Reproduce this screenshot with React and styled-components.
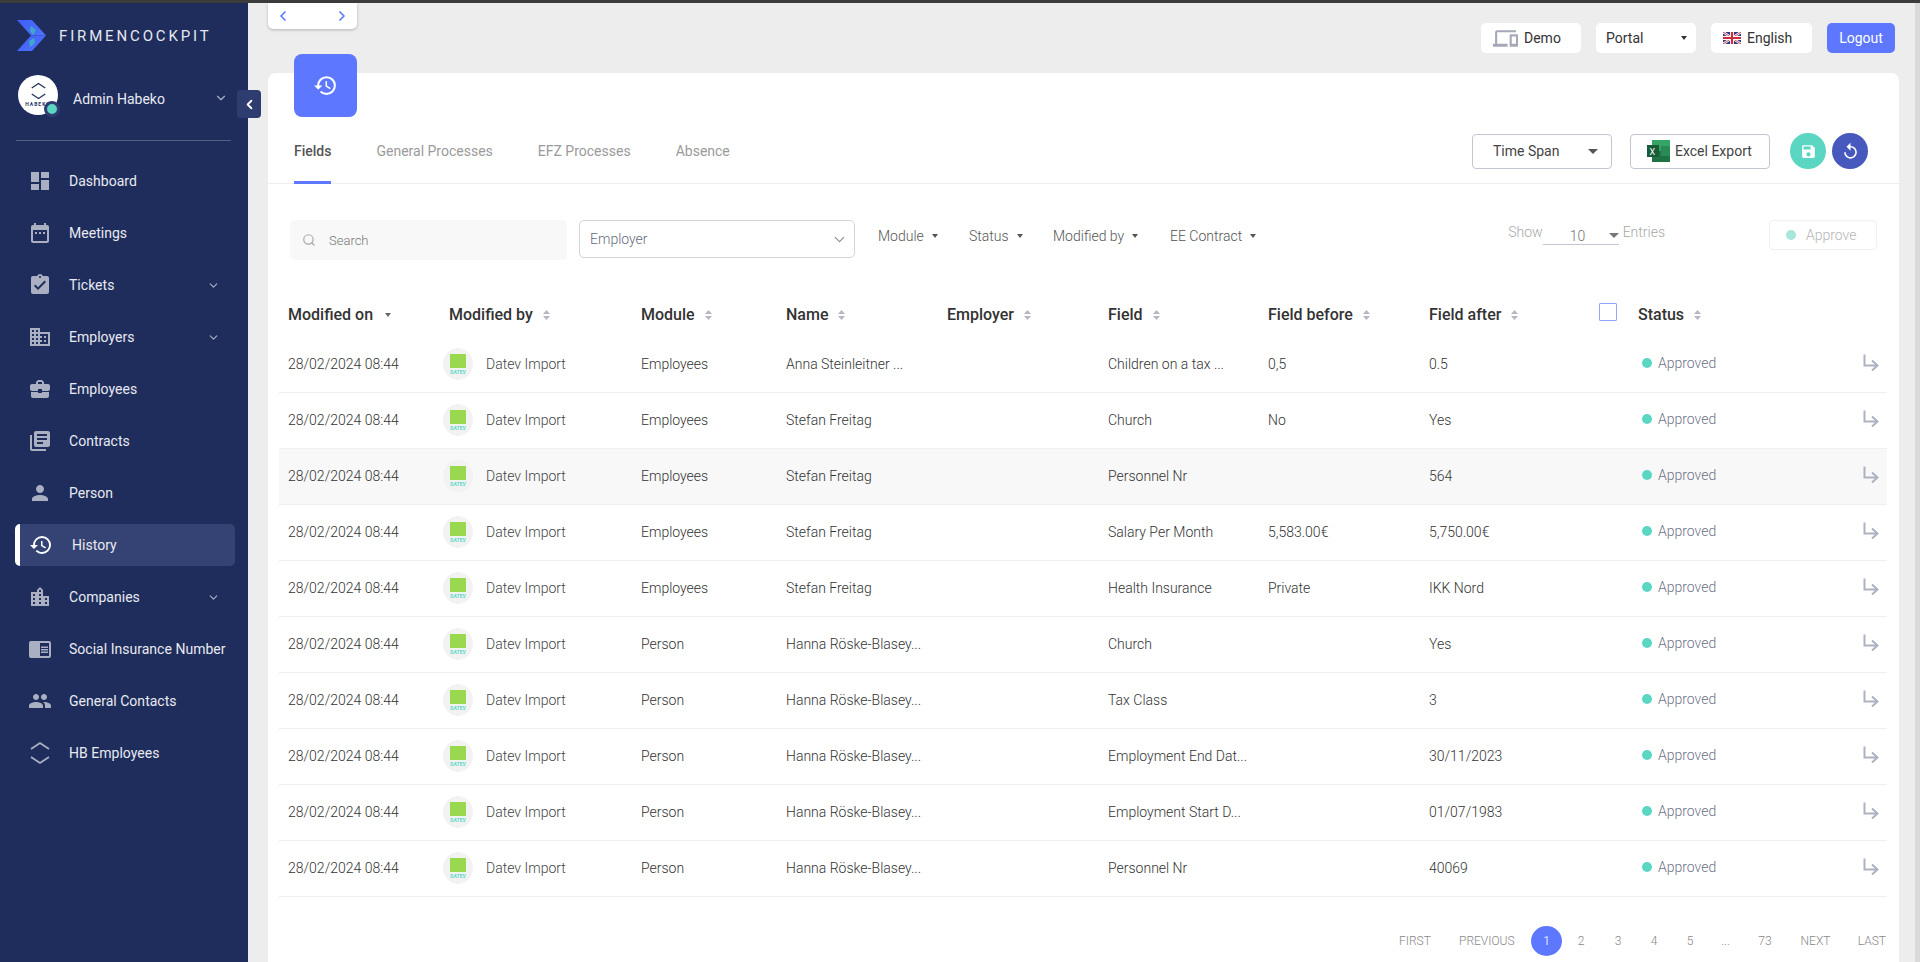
import React from 'react';
import styled, { createGlobalStyle } from 'styled-components';
import {
  MdDashboard, MdDateRange, MdAssignmentTurnedIn, MdBusiness, MdBusinessCenter, MdLibraryBooks,
  MdPerson, MdHistory, MdLocationCity, MdChromeReaderMode, MdPeople, MdDevices, MdSave, MdReplay,
} from 'react-icons/md';
import { ChevronDown, ChevronLeft, ChevronRight, Search } from 'lucide-react';

const GlobalStyle = createGlobalStyle`
  html, body { margin: 0; height: 100%; overflow: hidden; }
  body { font-family: Roboto, "Liberation Sans", sans-serif; font-size: 14px; color: #333; background: #ededed; }
  * { box-sizing: border-box; }
`;

const HabekoMark = ({ size = 20 }) => (
  <svg width={size} height={size * 1.2} viewBox="0 0 20 24" fill="none" stroke="currentColor" strokeWidth="1.8">
    <path d="M1 8 L10 2 L19 8" />
    <path d="M1 16 L10 22 L19 16" />
  </svg>
);

const navItems = [
  { label: 'Dashboard', icon: MdDashboard },
  { label: 'Meetings', icon: MdDateRange },
  { label: 'Tickets', icon: MdAssignmentTurnedIn, more: true },
  { label: 'Employers', icon: MdBusiness, more: true },
  { label: 'Employees', icon: MdBusinessCenter },
  { label: 'Contracts', icon: MdLibraryBooks },
  { label: 'Person', icon: MdPerson },
  { label: 'History', icon: MdHistory, active: true },
  { label: 'Companies', icon: MdLocationCity, more: true },
  { label: 'Social Insurance Number', icon: MdChromeReaderMode },
  { label: 'General Contacts', icon: MdPeople },
  { label: 'HB Employees', icon: HabekoMark },
];

const rows = [
  ['Employees', 'Anna Steinleitner ...', 'Children on a tax ...', '0,5', '0.5'],
  ['Employees', 'Stefan Freitag', 'Church', 'No', 'Yes'],
  ['Employees', 'Stefan Freitag', 'Personnel Nr', '', '564', true],
  ['Employees', 'Stefan Freitag', 'Salary Per Month', '5,583.00€', '5,750.00€'],
  ['Employees', 'Stefan Freitag', 'Health Insurance', 'Private', 'IKK Nord'],
  ['Person', 'Hanna Röske-Blasey...', 'Church', '', 'Yes'],
  ['Person', 'Hanna Röske-Blasey...', 'Tax Class', '', '3'],
  ['Person', 'Hanna Röske-Blasey...', 'Employment End Dat...', '', '30/11/2023'],
  ['Person', 'Hanna Röske-Blasey...', 'Employment Start D...', '', '01/07/1983'],
  ['Person', 'Hanna Röske-Blasey...', 'Personnel Nr', '', '40069'],
];

const columns = '161px 192px 145px 161px 161px 160px 161px 170px 1fr';

const headers = [
  { label: 'Modified on', sorted: true },
  { label: 'Modified by' },
  { label: 'Module' },
  { label: 'Name' },
  { label: 'Employer' },
  { label: 'Field' },
  { label: 'Field before' },
  { label: 'Field after' },
];

const App = () => (
  <>
    <GlobalStyle />
    <Page>
      <TopEdge />
      <Body>
        <Sidebar>
          <Brand>
            <svg width="29" height="31" viewBox="0 0 29 31">
              <defs>
                <linearGradient id="logoTop" x1="0" y1="0" x2="1" y2="1">
                  <stop offset="0" stopColor="#3f5ff5" />
                  <stop offset="1" stopColor="#4f74ff" />
                </linearGradient>
              </defs>
              <polygon points="0,0 15,0 29,15.5 14,15.5" fill="url(#logoTop)" />
              <polygon points="0,31 15,31 29,15.5 14,15.5" fill="url(#logoTop)" />
              <polygon points="14,6 19,10 16,15 13,11" fill="#3fa9c9" />
              <polygon points="12,21 17,18 18,23 13,27" fill="#3fa9c9" />
            </svg>
            <BrandName>FIRMENCOCKPIT</BrandName>
          </Brand>
          <Profile>
            <Avatar>
              <HabekoMark size={15} />
              <AvatarText>HABEKO</AvatarText>
              <OnlineDot />
            </Avatar>
            <ProfileName>Admin Habeko</ProfileName>
            <ProfileChevron><ChevronDown size={14} /></ProfileChevron>
            <CollapseButton><ChevronLeft size={15} strokeWidth={3} /></CollapseButton>
          </Profile>
          <SideDivider />
          <Nav>
            {navItems.map(({ label, icon: Icon, more, active }) => (
              <NavItem key={label} $active={active}>
                <NavIcon $active={active}><Icon size={label === 'HB Employees' ? 20 : 24} /></NavIcon>
                <NavLabel $active={active}>{label}</NavLabel>
                {more && <NavChevron><ChevronDown size={13} /></NavChevron>}
              </NavItem>
            ))}
          </Nav>
        </Sidebar>
        <Main>
          <TopRow>
            <Pager>
              <ChevronLeft size={16} strokeWidth={2.5} />
              <ChevronRight size={16} strokeWidth={2.5} />
            </Pager>
            <TopActions>
              <TopButton $width={100} $gap={6}>
                <MdDevices size={25} color="#a4a9b8" />
                <span>Demo</span>
              </TopButton>
              <TopButton $width={100} $between>
                <span>Portal</span>
                <Caret $size={3.5} $color="#333" />
              </TopButton>
              <TopButton $width={101} $gap={6}>
                <svg width="18" height="12" viewBox="0 0 60 40">
                  <rect width="60" height="40" fill="#2b3a7c" />
                  <path d="M0 0 L60 40 M60 0 L0 40" stroke="#fff" strokeWidth="8" />
                  <path d="M0 0 L60 40 M60 0 L0 40" stroke="#cf2b3a" strokeWidth="3" />
                  <path d="M30 0 V40 M0 20 H60" stroke="#fff" strokeWidth="13" />
                  <path d="M30 0 V40 M0 20 H60" stroke="#cf2b3a" strokeWidth="7" />
                </svg>
                <span>English</span>
              </TopButton>
              <LogoutButton>Logout</LogoutButton>
            </TopActions>
          </TopRow>
          <Card>
            <HistoryBadge><MdHistory size={25} /></HistoryBadge>
            <TabsRow>
              <Tabs>
                <Tab $active>Fields</Tab>
                <Tab>General Processes</Tab>
                <Tab>EFZ Processes</Tab>
                <Tab>Absence</Tab>
              </Tabs>
              <TabActions>
                <OutlineButton $width={140}>
                  <span>Time Span</span>
                  <Caret $size={5} $color="#555" />
                </OutlineButton>
                <ExportButton>
                  <svg width="23" height="22" viewBox="0 0 23 22">
                    <rect x="5" y="0" width="18" height="11" fill="#35a467" />
                    <rect x="5" y="11" width="18" height="11" fill="#1f7244" />
                    <rect x="14" y="6" width="9" height="10" fill="#2a8a55" />
                    <rect x="0" y="5" width="12" height="12" fill="#185c37" />
                    <text x="2.6" y="14.5" fontSize="9" fill="#fff" fontFamily="Roboto">X</text>
                  </svg>
                  <span>Excel Export</span>
                </ExportButton>
                <RoundButton $color="#5bd6c3" $first><MdSave size={17} /></RoundButton>
                <RoundButton $color="#4759bd"><MdReplay size={19} /></RoundButton>
              </TabActions>
            </TabsRow>
            <FilterRow>
              <SearchBox>
                <Search size={14} color="#a8a8a8" />
                <span>Search</span>
              </SearchBox>
              <EmployerSelect>
                <span>Employer</span>
                <ChevronDown size={17} color="#888" strokeWidth={1.5} />
              </EmployerSelect>
              <FilterMenus>
                {[['Module', 91], ['Status', 84], ['Modified by', 117], ['EE Contract', 100]].map(([label, width]) => (
                  <FilterMenu key={label} $width={width}>
                    {label}
                    <Caret $size={3.5} $color="#555" />
                  </FilterMenu>
                ))}
              </FilterMenus>
              <EntriesControl>
                <span>Show</span>
                <EntriesSelect>
                  <b>10</b>
                  <Caret $size={5} $color="#777" />
                </EntriesSelect>
                <span>Entries</span>
              </EntriesControl>
              <ApproveButton>
                <ApproveDot />
                Approve
              </ApproveButton>
            </FilterRow>
            <Table>
              <HeadRow>
                {headers.map(({ label, sorted }) => (
                  <HeadCell key={label} $gap={sorted ? 12 : 10}>
                    {label}
                    {sorted ? <Caret $size={3.5} $color="#666" /> : <SortArrows />}
                  </HeadCell>
                ))}
                <StatusHead>
                  <HeadCheck />
                  <HeadCell>Status<SortArrows /></HeadCell>
                </StatusHead>
              </HeadRow>
              {rows.map(([module, name, field, before, after, hover], i) => (
                <Row key={i} $hover={hover}>
                  <Cell>28/02/2024 08:44</Cell>
                  <UserCell>
                    <UserAvatar>
                      <svg width="16" height="20" viewBox="0 0 16 20">
                        <rect width="16" height="14" fill="#99d94f" />
                        <text x="8" y="19.5" textAnchor="middle" fontSize="5" fontWeight="700" fill="#5fd8c8" fontFamily="Roboto">DATEV</text>
                      </svg>
                    </UserAvatar>
                    Datev Import
                  </UserCell>
                  <Cell>{module}</Cell>
                  <Cell>{name}</Cell>
                  <Cell />
                  <Cell>{field}</Cell>
                  <Cell>{before}</Cell>
                  <Cell>{after}</Cell>
                  <StatusCell>
                    <StatusLabel><StatusDot />Approved</StatusLabel>
                    <ForwardIcon width="16" height="18" viewBox="0 0 16 18" fill="none" stroke="#aeb1bf" strokeWidth="2">
                      <path d="M1.5 0.5 V11.5 H14" />
                      <path d="M9 6.5 L14.5 11.5 L9 16.5" />
                    </ForwardIcon>
                  </StatusCell>
                </Row>
              ))}
            </Table>
            <Pagination>
              <PageText $width={60}>FIRST</PageText>
              <PageText $width={72}>PREVIOUS</PageText>
              <PageCurrent>1</PageCurrent>
              <PageText $width={38} $center>2</PageText>
              <PageText $width={36} $center>3</PageText>
              <PageText $width={36} $center>4</PageText>
              <PageText $width={36} $center>5</PageText>
              <PageText $width={35} $center>...</PageText>
              <PageText $width={44} $center>73</PageText>
              <PageText $width={57} $center>NEXT</PageText>
              <PageText $width={42} $end>LAST</PageText>
            </Pagination>
          </Card>
        </Main>
        <ScrollTrack />
      </Body>
    </Page>
  </>
);

const Page = styled.div`
  display: flex;
  flex-direction: column;
  height: 100vh;
`;
const TopEdge = styled.div`
  height: 3px;
  background: #3c3c3c;
  flex: none;
`;
const Body = styled.div`
  display: flex;
  flex: 1;
  min-height: 0;
`;
const Sidebar = styled.aside`
  width: 248px;
  flex: none;
  background: #1f2d5c;
  color: #fff;
  padding: 17px 0 0 0;
`;
const Brand = styled.div`
  display: flex;
  align-items: center;
  gap: 13px;
  padding-left: 17px;
  height: 31px;
`;
const BrandName = styled.span`
  font-size: 15px;
  letter-spacing: 2.85px;
  color: #e6e8ef;
`;
const Profile = styled.div`
  position: relative;
  display: flex;
  align-items: center;
  height: 40px;
  margin-top: 24px;
  padding-left: 18px;
`;
const Avatar = styled.div`
  position: relative;
  width: 40px;
  height: 40px;
  flex: none;
  border-radius: 50%;
  background: #fff;
  color: #26335f;
  display: flex;
  flex-direction: column;
  align-items: center;
  padding-top: 7px;
`;
const AvatarText = styled.span`
  font-size: 5px;
  font-weight: 700;
  letter-spacing: 1px;
  margin-top: 1px;
`;
const OnlineDot = styled.span`
  position: absolute;
  right: -2px;
  bottom: -2px;
  width: 16px;
  height: 16px;
  border-radius: 50%;
  background: #5bd6c3;
  border: 3px solid #2e3c6f;
`;
const ProfileName = styled.span`
  margin: 7px 0 0 15px;
  width: 141px;
  font-size: 14px;
  color: #e8eaf1;
`;
const ProfileChevron = styled.span`
  display: flex;
  margin-top: 6px;
  color: #a9b0c6;
`;
const CollapseButton = styled.div`
  position: absolute;
  left: 237px;
  top: 15px;
  width: 24px;
  height: 28px;
  border-radius: 4px;
  background: #2e3c6f;
  color: #fff;
  display: flex;
  align-items: center;
  justify-content: center;
`;
const SideDivider = styled.div`
  height: 1px;
  background: #55607f;
  margin: 25px 17px 0 16px;
`;
const Nav = styled.nav`
  display: flex;
  flex-direction: column;
  gap: 10px;
  padding: 19px 13px 0 15px;
`;
const NavItem = styled.div`
  display: flex;
  align-items: center;
  height: 42px;
  border-radius: 5px;
  background: ${({ $active }) => ($active ? '#354374' : 'transparent')};
  border-left: ${({ $active }) => ($active ? '5px solid #fff' : '0')};
  padding-left: ${({ $active }) => ($active ? '9px' : '13px')};
`;
const NavIcon = styled.span`
  width: 24px;
  height: 24px;
  flex: none;
  display: flex;
  align-items: center;
  justify-content: center;
  color: ${({ $active }) => ($active ? '#fff' : '#aab0c2')};
`;
const NavLabel = styled.span`
  margin-left: ${({ $active }) => ($active ? '19px' : '17px')};
  font-size: 14px;
  letter-spacing: 0.02px;
  color: #e8eaf1;
  white-space: nowrap;
`;
const NavChevron = styled.span`
  margin-left: auto;
  margin-right: 15px;
  display: flex;
  color: #a9b0c6;
`;
const Main = styled.main`
  flex: 1;
  min-width: 0;
  display: flex;
  flex-direction: column;
  padding: 0 16px 0 20px;
`;
const TopRow = styled.div`
  display: flex;
  justify-content: space-between;
  height: 70px;
  flex: none;
`;
const Pager = styled.div`
  width: 89px;
  height: 26px;
  background: #fff;
  border-radius: 0 0 5px 5px;
  box-shadow: 0 1px 3px rgba(0, 0, 0, 0.25);
  color: #5a78ff;
  display: flex;
  align-items: center;
  justify-content: space-between;
  padding: 0 7px 0 7px;
`;
const TopActions = styled.div`
  display: flex;
  gap: 15px;
  padding: 20px 4px 0 0;
`;
const TopButton = styled.div`
  width: ${({ $width }) => $width}px;
  height: 30px;
  background: #fff;
  border-radius: 5px;
  display: flex;
  align-items: center;
  justify-content: ${({ $between }) => ($between ? 'space-between' : 'flex-start')};
  gap: ${({ $gap }) => $gap ?? 11}px;
  padding: 0 ${({ $between }) => ($between ? '9px' : '10px')} 0 ${({ $between }) => ($between ? '10px' : '12px')};
  font-size: 14px;
  color: #333;
`;
const LogoutButton = styled.div`
  width: 68px;
  height: 30px;
  border-radius: 5px;
  background: #5d78ff;
  color: #fff;
  font-size: 14px;
  display: flex;
  align-items: center;
  justify-content: center;
`;
const Caret = styled.span`
  display: inline-block;
  width: 0;
  height: 0;
  border-left: ${({ $size }) => $size}px solid transparent;
  border-right: ${({ $size }) => $size}px solid transparent;
  border-top: ${({ $size }) => Math.max($size, 4)}px solid ${({ $color }) => $color};
  flex: none;
`;
const Card = styled.section`
  position: relative;
  flex: 1;
  background: #fff;
  border-radius: 8px 8px 0 0;
  min-height: 0;
`;
const HistoryBadge = styled.div`
  position: absolute;
  left: 26px;
  top: -19px;
  width: 63px;
  height: 63px;
  border-radius: 8px;
  background: #5d78ff;
  color: #fff;
  display: flex;
  align-items: center;
  justify-content: center;
`;
const TabsRow = styled.div`
  height: 111px;
  display: flex;
  justify-content: space-between;
  align-items: flex-end;
  border-bottom: 1px solid #eeeeee;
  padding: 0 31px 0 26px;
`;
const Tabs = styled.div`
  display: flex;
  gap: 45px;
  margin-bottom: -1px;
`;
const Tab = styled.div`
  height: 43px;
  line-height: 20px;
  font-size: 14px;
  font-weight: ${({ $active }) => ($active ? 500 : 400)};
  color: ${({ $active }) => ($active ? '#555' : '#9a9a9a')};
  border-bottom: 3px solid ${({ $active }) => ($active ? '#5d78ff' : 'transparent')};
`;
const TabActions = styled.div`
  display: flex;
  align-items: center;
  margin-bottom: 14px;
`;
const OutlineButton = styled.div`
  width: ${({ $width }) => $width}px;
  height: 35px;
  border: 1px solid #c3c6d3;
  border-radius: 4px;
  display: flex;
  align-items: center;
  justify-content: space-between;
  padding: 0 13px 0 20px;
  color: #444;
  font-size: 14px;
`;
const ExportButton = styled(OutlineButton)`
  width: 140px;
  margin-left: 18px;
  justify-content: flex-start;
  gap: 5px;
  padding: 0 0 0 16px;
`;
const RoundButton = styled.div`
  width: 36px;
  height: 36px;
  border-radius: 50%;
  background: ${({ $color }) => $color};
  color: #fff;
  display: flex;
  align-items: center;
  justify-content: center;
  margin-left: ${({ $first }) => ($first ? '20px' : '6px')};
`;
const FilterRow = styled.div`
  display: flex;
  align-items: flex-start;
  margin-top: 36px;
  padding: 0 22px 0 22px;
  height: 40px;
`;
const SearchBox = styled.div`
  width: 277px;
  height: 40px;
  flex: none;
  border-radius: 5px;
  background: #f8f8f8;
  display: flex;
  align-items: center;
  gap: 13px;
  padding-left: 12px;
  font-size: 13px;
  font-weight: 300;
  color: #777;
`;
const EmployerSelect = styled.div`
  width: 276px;
  height: 38px;
  flex: none;
  margin-left: 12px;
  border: 1px solid #d2d4dc;
  border-radius: 5px;
  display: flex;
  align-items: center;
  justify-content: space-between;
  padding: 0 6px 0 10px;
  font-size: 14px;
  font-weight: 300;
  color: #666b7c;
`;
const FilterMenus = styled.div`
  display: flex;
  height: 38px;
  align-items: center;
  margin-left: 23px;
  flex: none;
  padding-bottom: 6px;
`;
const FilterMenu = styled.div`
  width: ${({ $width }) => $width}px;
  display: flex;
  align-items: center;
  gap: 8px;
  font-size: 14px;
  font-weight: 300;
  color: #555;
`;
const EntriesControl = styled.div`
  margin-left: auto;
  display: flex;
  align-items: flex-start;
  font-size: 14px;
  font-weight: 300;
  color: #a8a8a8;
  padding-top: 4px;
  margin-right: 104px;
  & > span:last-child { margin-left: 4px; }
`;
const EntriesSelect = styled.div`
  width: 76px;
  height: 21px;
  border-bottom: 1px solid #c4c6d0;
  display: flex;
  align-items: center;
  justify-content: space-between;
  padding: 3px 0 0 27px;
  b { font-weight: 300; font-size: 14px; color: #777; }
`;
const ApproveButton = styled.div`
  width: 108px;
  height: 30px;
  flex: none;
  border: 1px solid #f0f0f0;
  border-radius: 4px;
  display: flex;
  align-items: center;
  gap: 10px;
  padding-left: 16px;
  font-size: 14px;
  font-weight: 300;
  color: #b5b5b5;
`;
const ApproveDot = styled.span`
  width: 10px;
  height: 10px;
  border-radius: 50%;
  background: #a8e5db;
`;
const Table = styled.div`
  margin: 31px 12px 0 11px;
`;
const HeadRow = styled.div`
  display: grid;
  grid-template-columns: ${columns};
  height: 46px;
  padding-left: 9px;
  align-items: center;
  padding-top: 1px;
`;
const HeadCell = styled.div`
  display: flex;
  align-items: center;
  gap: ${({ $gap }) => $gap ?? 10}px;
  font-size: 16px;
  font-weight: 500;
  color: #333;
`;
const SortArrows = () => (
  <svg width="7" height="10" viewBox="0 0 7 10" fill="#b5b7c2">
    <path d="M3.5 0 L7 4 H0 Z" />
    <path d="M3.5 10 L7 6 H0 Z" />
  </svg>
);
const StatusHead = styled.div`
  display: flex;
  align-items: center;
  gap: 21px;
`;
const HeadCheck = styled.div`
  width: 18px;
  height: 18px;
  border: 1px solid #93a6ff;
  border-radius: 1px;
  margin-top: -5px;
`;
const Row = styled.div`
  display: grid;
  grid-template-columns: ${columns};
  height: 56px;
  padding-left: 9px;
  border-bottom: 1px solid #f0f0f0;
  align-items: center;
  background: ${({ $hover }) => ($hover ? '#f8f8f8' : 'transparent')};
  font-size: 14px;
  font-weight: 300;
  color: #333;
`;
const Cell = styled.div`
  white-space: nowrap;
  margin-top: -1px;
`;
const UserCell = styled.div`
  display: flex;
  align-items: center;
  gap: 13px;
  margin-left: -6px;
  color: #444;
  margin-top: -2px;
`;
const UserAvatar = styled.span`
  width: 30px;
  height: 32px;
  border-radius: 50%;
  background: #f2f2f2;
  display: flex;
  align-items: center;
  justify-content: center;
`;
const StatusCell = styled.div`
  grid-column: 9;
  display: flex;
  align-items: center;
  justify-content: space-between;
  padding: 0 8px 0 43px;
  color: #6d7287;
`;
const StatusLabel = styled.span`
  display: flex;
  align-items: center;
  gap: 6px;
  margin-top: -3px;
`;
const StatusDot = styled.span`
  width: 10px;
  height: 10px;
  border-radius: 50%;
  background: #5bd6c3;
`;
const ForwardIcon = styled.svg`
  margin-top: -3px;
`;
const Pagination = styled.div`
  display: flex;
  justify-content: flex-end;
  align-items: center;
  height: 30px;
  margin-top: 29px;
  padding-right: 13px;
`;
const PageText = styled.span`
  width: ${({ $width }) => $width}px;
  font-size: 12px;
  font-weight: 300;
  color: #888;
  text-align: ${({ $center, $end }) => ($center ? 'center' : $end ? 'right' : 'left')};
`;
const PageCurrent = styled.span`
  width: 31px;
  height: 30px;
  border-radius: 50%;
  background: #5d78ff;
  color: #d8deff;
  font-size: 12px;
  display: flex;
  align-items: center;
  justify-content: center;
`;
const ScrollTrack = styled.div`
  width: 5px;
  flex: none;
  background: #d9d9d9;
`;

export default App;
